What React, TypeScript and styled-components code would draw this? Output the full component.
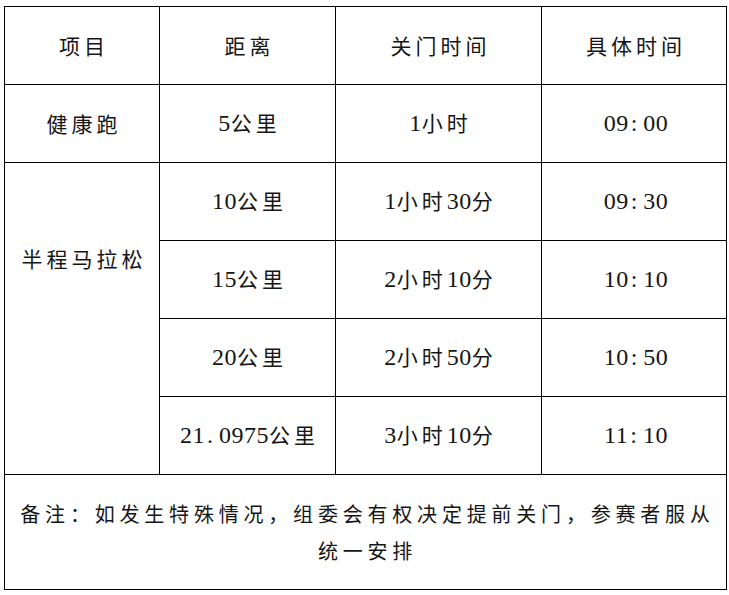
import type { FC } from 'react';

import styled, { createGlobalStyle } from 'styled-components';

const GlobalStyle = createGlobalStyle`
  html, body {
    margin: 0;
    padding: 0;
    background: #ffffff;
  }
  body {
    font-family: 'Noto Sans CJK SC', 'Liberation Serif', serif;
    color: #151515;
  }
`;

const Page = styled.div`
  padding: 6px 0 0 4px;
`;

const Table = styled.table`
  border-collapse: collapse;
  table-layout: fixed;
  width: 722px;
`;

const Col = styled.col<{ $w: number }>`
  width: ${({ $w }) => $w}px;
`;

const Cell = styled.td`
  border: 1px solid #000;
  height: 75px;
  padding: 0 0 2px 4px;
  text-align: center;
  vertical-align: middle;
  font-size: 21px;
  font-weight: 400;
  letter-spacing: 4px;
  line-height: 30px;
`;

const HeadCell = styled(Cell).attrs({ as: 'th' })`
  font-weight: 400;
`;

const SpanCell = styled(Cell)`
  vertical-align: top;
  padding-top: 80px;
`;

const NoteCell = styled(Cell)`
  height: 114px;
  padding: 0 10px 0 14px;
  line-height: 37px;
  letter-spacing: 4.8px;
  font-size: 20px;
`;

const Num = styled.span`
  font-family: 'Liberation Serif', serif;
  font-size: 24px;
  letter-spacing: 0.5px;
`;

const Sep = styled.span`
  font-family: 'Liberation Serif', serif;
  font-size: 24px;
  margin: 0 2px;
`;

// split digits out of the CJK text so they get the serif face
const Text: FC<{ value: string }> = ({ value }) => {
  const parts = value.split(/([0-9]+|[.:])/).filter(Boolean);
  return (
    <>
      {parts.map((p, i) => {
        if (p === '.' || p === ':') return <Sep key={i}>{p}</Sep>;
        if (/^[0-9]+$/.test(p)) return <Num key={i}>{p}</Num>;
        return <span key={i}>{p}</span>;
      })}
    </>
  );
};

type Row = { dist: string; close: string; time: string };

const marathon: Row[] = [
  { dist: '10公里', close: '1小时30分', time: '09:30' },
  { dist: '15公里', close: '2小时10分', time: '10:10' },
  { dist: '20公里', close: '2小时50分', time: '10:50' },
  { dist: '21.0975公里', close: '3小时10分', time: '11:10' },
];

const App: FC = () => {
  return (
    <>
      <GlobalStyle />
      <Page>
        <Table>
          <colgroup>
            <Col $w={155} />
            <Col $w={176} />
            <Col $w={206} />
            <Col $w={185} />
          </colgroup>
          <thead>
            <tr>
              <HeadCell>项目</HeadCell>
              <HeadCell>距离</HeadCell>
              <HeadCell>关门时间</HeadCell>
              <HeadCell>具体时间</HeadCell>
            </tr>
          </thead>
          <tbody>
            <tr>
              <Cell>健康跑</Cell>
              <Cell>
                <Text value="5公里" />
              </Cell>
              <Cell>
                <Text value="1小时" />
              </Cell>
              <Cell>
                <Text value="09:00" />
              </Cell>
            </tr>
            {marathon.map((row, i) => (
              <tr key={row.dist}>
                {i === 0 && (
                  <SpanCell rowSpan={marathon.length}>半程马拉松</SpanCell>
                )}
                <Cell>
                  <Text value={row.dist} />
                </Cell>
                <Cell>
                  <Text value={row.close} />
                </Cell>
                <Cell>
                  <Text value={row.time} />
                </Cell>
              </tr>
            ))}
            <tr>
              <NoteCell colSpan={4}>
                备注：如发生特殊情况，组委会有权决定提前关门，参赛者服从统一安排
              </NoteCell>
            </tr>
          </tbody>
        </Table>
      </Page>
    </>
  );
};

export default App;
